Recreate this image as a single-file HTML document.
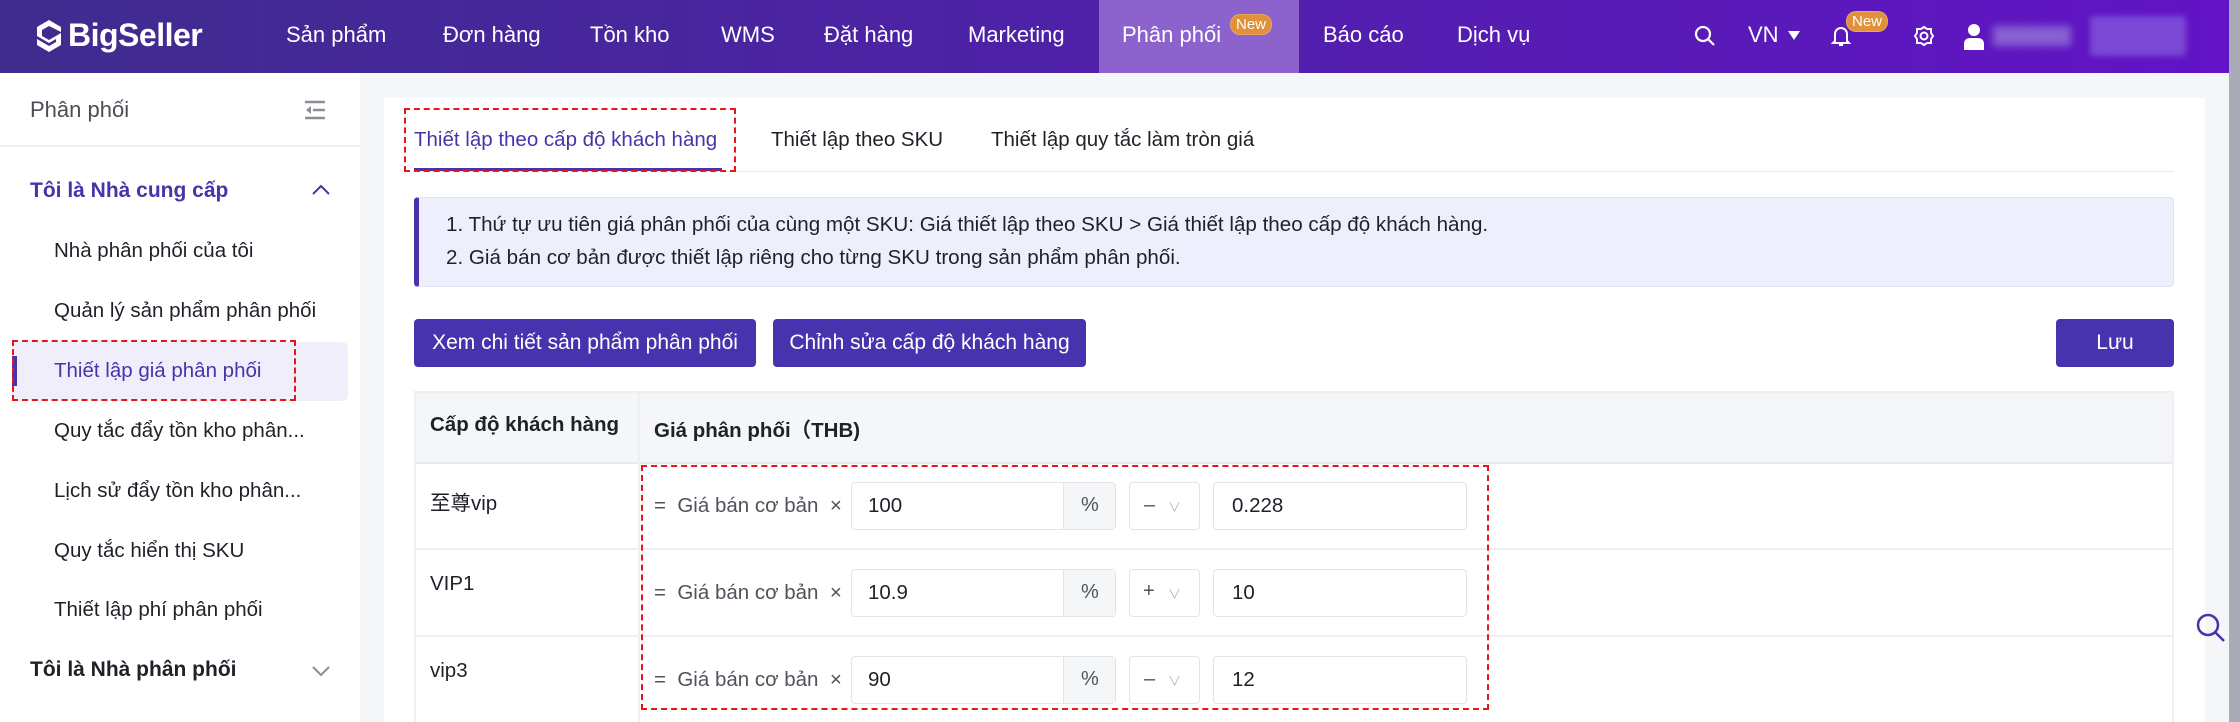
<!DOCTYPE html>
<html><head><meta charset="utf-8"><style>
*{margin:0;padding:0;box-sizing:border-box}
body{width:2240px;height:722px;overflow:hidden;background:#f5f6f8;font-family:"Liberation Sans","Noto Sans CJK SC",sans-serif;position:relative;color:#1f2129}
.a{position:absolute;white-space:nowrap}
.hdr{left:0;top:0;width:2229px;height:73px;background:linear-gradient(90deg,#3f2c8e 0%,#4d22a6 45%,#6214c6 100%)}
.nav{color:#fff;font-size:22px;top:22px}
.badge{background:#e0913a;color:#fff;font-size:15px;border-radius:10px;padding:1px 5px;border:1px solid #fff3}
.side{left:0;top:73px;width:360px;height:649px;background:#fff}
.si{font-size:20.5px;color:#1f2129;left:54px}
.card{left:384px;top:98px;width:1821px;height:624px;background:#fff}
.btn{background:#4733ad;color:#fff;font-size:21px;border-radius:4px;height:48px;line-height:48px;text-align:center;top:319px}
.inp{border:1px solid #e3e4ea;border-radius:4px;height:48px;background:#fff}
.ctl{font-size:20.5px;color:#50535c}
.rdash{border:2.5px dashed #e8161b}
</style></head><body>
<div class="a hdr"></div>
<svg class="a" style="left:34px;top:18px" width="30" height="36" viewBox="0 0 30 36"><path d="M15 2 L27 9 L27 14 L15 8 L8 12 L8 18 L15 22 L27 15 L27 27 L15 34 L3 27 L3 21 L15 28 L22 24 L22 21 L15 25 L3 18 L3 9 Z" fill="#fff"/></svg>
<div class="a" style="left:68px;top:17px;color:#fff;font-size:32px;font-weight:bold;letter-spacing:-0.5px">BigSeller</div>
<div class="a nav" style="left:286px">Sản phẩm</div>
<div class="a nav" style="left:443px">Đơn hàng</div>
<div class="a nav" style="left:590px">Tồn kho</div>
<div class="a nav" style="left:721px">WMS</div>
<div class="a nav" style="left:824px">Đặt hàng</div>
<div class="a nav" style="left:968px">Marketing</div>
<div class="a" style="left:1099px;top:0;width:200px;height:73px;background:#8c63cc"></div>
<div class="a nav" style="left:1122px">Phân phối</div>
<div class="a badge" style="left:1230px;top:14px">New</div>
<div class="a nav" style="left:1323px">Báo cáo</div>
<div class="a nav" style="left:1457px">Dịch vụ</div>
<svg class="a" style="left:1694px;top:25px" width="22" height="22" viewBox="0 0 22 22"><circle cx="9" cy="9" r="7" fill="none" stroke="#fff" stroke-width="2.2"/><path d="M14 14 L20 20" stroke="#fff" stroke-width="2.2"/></svg>
<div class="a nav" style="left:1748px">VN</div>
<div class="a" style="left:1788px;top:31px;width:0;height:0;border-left:6px solid transparent;border-right:6px solid transparent;border-top:9px solid #fff"></div>
<svg class="a" style="left:1831px;top:24px" width="20" height="24" viewBox="0 0 20 24"><path d="M4 17 V10 A6 6 0 0 1 16 10 V17 L18 19 H2 Z M8 21 H12" fill="none" stroke="#fff" stroke-width="2"/></svg>
<div class="a badge" style="left:1846px;top:11px">New</div>
<svg class="a" style="left:1913px;top:25px" width="22" height="22" viewBox="0 0 22 22"><circle cx="11" cy="11" r="3.5" fill="none" stroke="#fff" stroke-width="2"/><path d="M11 2 L14 4 L18 4 L18 8 L20 11 L18 14 L18 18 L14 18 L11 20 L8 18 L4 18 L4 14 L2 11 L4 8 L4 4 L8 4 Z" fill="none" stroke="#fff" stroke-width="2"/></svg>
<svg class="a" style="left:1961px;top:22px" width="26" height="28" viewBox="0 0 26 28"><circle cx="13" cy="8" r="6" fill="#fff"/><path d="M3 28 V22 Q3 16 10 16 H16 Q23 16 23 22 V28 Z" fill="#fff"/></svg>
<div class="a" style="left:1993px;top:26px;width:78px;height:20px;background:#9a80d8;filter:blur(4px);opacity:.7"></div>
<div class="a" style="left:2090px;top:16px;width:96px;height:40px;background:#7a48d4;filter:blur(3px);border-radius:4px"></div>
<div class="a" style="left:2229px;top:0;width:11px;height:722px;background:#a9abb6"></div>

<div class="a side"></div>
<div class="a" style="left:0;top:145px;width:360px;height:2px;background:#eef0f3"></div>
<div class="a" style="left:30px;top:97px;font-size:22px;color:#4a4d55">Phân phối</div>
<svg class="a" style="left:303px;top:100px" width="24" height="20" viewBox="0 0 24 20"><path d="M2 2 H22 M10 10 H22 M2 18 H22" stroke="#8a8e98" stroke-width="2.4"/><path d="M8 6 L3 10 L8 14 Z" fill="#8a8e98"/></svg>
<div class="a" style="left:30px;top:179px;font-size:21px;font-weight:bold;color:#4b32a8">Tôi là Nhà cung cấp</div>
<svg class="a" style="left:311px;top:184px" width="20" height="12" viewBox="0 0 20 12"><path d="M2 10 L10 2 L18 10" fill="none" stroke="#4b32a8" stroke-width="2"/></svg>
<div class="a si" style="top:239px">Nhà phân phối của tôi</div>
<div class="a si" style="top:299px">Quản lý sản phẩm phân phối</div>
<div class="a" style="left:12px;top:342px;width:336px;height:59px;background:#f0eefb;border-radius:6px"></div>
<div class="a" style="left:12px;top:356px;width:5px;height:30px;background:#4b32a8"></div>
<div class="a si" style="top:359px;color:#4b32a8">Thiết lập giá phân phối</div>
<div class="a rdash" style="left:12px;top:340px;width:284px;height:61px"></div>
<div class="a si" style="top:419px">Quy tắc đẩy tồn kho phân...</div>
<div class="a si" style="top:479px">Lịch sử đẩy tồn kho phân...</div>
<div class="a si" style="top:539px">Quy tắc hiển thị SKU</div>
<div class="a si" style="top:598px">Thiết lập phí phân phối</div>
<div class="a" style="left:30px;top:658px;font-size:21px;font-weight:bold;color:#1f2129">Tôi là Nhà phân phối</div>
<svg class="a" style="left:311px;top:665px" width="20" height="12" viewBox="0 0 20 12"><path d="M2 2 L10 10 L18 2" fill="none" stroke="#8a8e98" stroke-width="2"/></svg>

<div class="a card"></div>
<div class="a" style="left:414px;top:171px;width:1760px;height:1px;background:#e8e9ee"></div>
<div class="a" style="left:414px;top:128px;font-size:20.5px;color:#4b32a8">Thiết lập theo cấp độ khách hàng</div>
<div class="a" style="left:414px;top:168px;width:308px;height:3px;background:#4b32a8"></div>
<div class="a rdash" style="left:404px;top:108px;width:332px;height:64px"></div>
<div class="a" style="left:771px;top:128px;font-size:20.5px;color:#1f2129">Thiết lập theo SKU</div>
<div class="a" style="left:991px;top:128px;font-size:20.5px;color:#1f2129">Thiết lập quy tắc làm tròn giá</div>

<div class="a" style="left:414px;top:197px;width:1760px;height:90px;background:#eeeffd;border:1px solid #e1e3f6;border-left:5px solid #4b32a8;border-radius:4px"></div>
<div class="a" style="left:446px;top:213px;font-size:20.6px;color:#1f2129">1. Thứ tự ưu tiên giá phân phối của cùng một SKU: Giá thiết lập theo SKU &gt; Giá thiết lập theo cấp độ khách hàng.</div>
<div class="a" style="left:446px;top:246px;font-size:20.6px;color:#1f2129">2. Giá bán cơ bản được thiết lập riêng cho từng SKU trong sản phẩm phân phối.</div>

<div class="a btn" style="left:414px;width:342px">Xem chi tiết sản phẩm phân phối</div>
<div class="a btn" style="left:773px;width:313px">Chỉnh sửa cấp độ khách hàng</div>
<div class="a btn" style="left:2056px;width:118px">Lưu</div>

<div class="a" style="left:414px;top:391px;width:1760px;height:331px;border:2px solid #eeeff2;border-bottom:none"></div>
<div class="a" style="left:416px;top:393px;width:1756px;height:71px;background:#f5f6f8;border-bottom:2px solid #eaebee"></div>
<div class="a" style="left:638px;top:391px;width:2px;height:331px;background:#eeeff2"></div>
<div class="a" style="left:416px;top:548px;width:1756px;height:2px;background:#eeeff2"></div>
<div class="a" style="left:416px;top:635px;width:1756px;height:2px;background:#eeeff2"></div>
<div class="a" style="left:430px;top:413px;font-size:20.5px;font-weight:bold">Cấp độ khách hàng</div>
<div class="a" style="left:654px;top:413px;font-size:20.5px;font-weight:bold">Giá phân phối（THB)</div>

<div class="a" style="left:430px;top:486px;font-size:20.5px">至尊vip</div>
<div class="a" style="left:430px;top:572px;font-size:20.5px">VIP1</div>
<div class="a" style="left:430px;top:659px;font-size:20.5px">vip3</div>

<div class="a ctl" style="left:654px;top:494px">=&nbsp; Giá bán cơ bản&nbsp; ×</div>
<div class="a inp" style="left:851px;top:482px;width:265px"></div>
<div class="a" style="left:1063px;top:483px;width:52px;height:46px;background:#f5f6f8;border-left:1px solid #e3e4ea"></div>
<div class="a" style="left:1081px;top:494px;font-size:20px;color:#50535c">%</div>
<div class="a" style="left:868px;top:494px;font-size:20.5px">100</div>
<div class="a inp" style="left:1129px;top:482px;width:71px"></div>
<div class="a" style="left:1144px;top:494px;font-size:20px;color:#50535c">–</div>
<div class="a" style="left:1168px;top:497px;font-size:13px;color:#b5b8c0">∨</div>
<div class="a inp" style="left:1213px;top:482px;width:254px"></div>
<div class="a" style="left:1232px;top:494px;font-size:20.5px">0.228</div>

<div class="a ctl" style="left:654px;top:581px">=&nbsp; Giá bán cơ bản&nbsp; ×</div>
<div class="a inp" style="left:851px;top:569px;width:265px"></div>
<div class="a" style="left:1063px;top:570px;width:52px;height:46px;background:#f5f6f8;border-left:1px solid #e3e4ea"></div>
<div class="a" style="left:1081px;top:581px;font-size:20px;color:#50535c">%</div>
<div class="a" style="left:868px;top:581px;font-size:20.5px">10.9</div>
<div class="a inp" style="left:1129px;top:569px;width:71px"></div>
<div class="a" style="left:1143px;top:580px;font-size:20px;color:#50535c">+</div>
<div class="a" style="left:1168px;top:584px;font-size:13px;color:#b5b8c0">∨</div>
<div class="a inp" style="left:1213px;top:569px;width:254px"></div>
<div class="a" style="left:1232px;top:581px;font-size:20.5px">10</div>

<div class="a ctl" style="left:654px;top:668px">=&nbsp; Giá bán cơ bản&nbsp; ×</div>
<div class="a inp" style="left:851px;top:656px;width:265px"></div>
<div class="a" style="left:1063px;top:657px;width:52px;height:46px;background:#f5f6f8;border-left:1px solid #e3e4ea"></div>
<div class="a" style="left:1081px;top:668px;font-size:20px;color:#50535c">%</div>
<div class="a" style="left:868px;top:668px;font-size:20.5px">90</div>
<div class="a inp" style="left:1129px;top:656px;width:71px"></div>
<div class="a" style="left:1144px;top:668px;font-size:20px;color:#50535c">–</div>
<div class="a" style="left:1168px;top:671px;font-size:13px;color:#b5b8c0">∨</div>
<div class="a inp" style="left:1213px;top:656px;width:254px"></div>
<div class="a" style="left:1232px;top:668px;font-size:20.5px">12</div>

<div class="a rdash" style="left:641px;top:465px;width:848px;height:245px"></div>

<svg class="a" style="left:2195px;top:612px" width="32" height="32" viewBox="0 0 32 32"><circle cx="13" cy="13" r="10" fill="none" stroke="#4b32a8" stroke-width="2.5"/><path d="M20 20 L29 29" stroke="#4b32a8" stroke-width="2.5"/></svg>
</body></html>
